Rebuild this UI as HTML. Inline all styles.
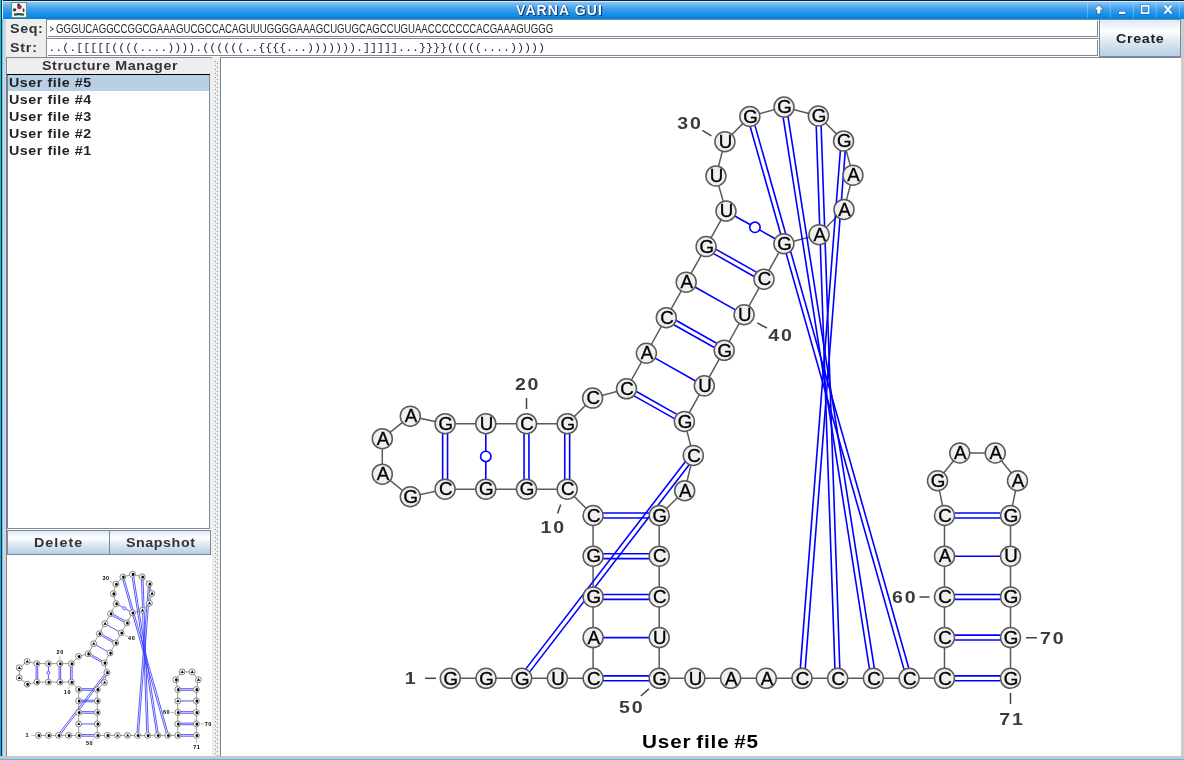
<!DOCTYPE html>
<html><head><meta charset="utf-8"><style>
*{margin:0;padding:0;box-sizing:border-box}
html,body{width:1184px;height:760px;overflow:hidden;background:#eeeeee;font-family:"Liberation Sans",sans-serif;position:relative;-webkit-font-smoothing:antialiased}
body{will-change:transform}
.a{position:absolute}
.ui{font-family:"Liberation Sans",sans-serif;font-weight:bold;font-size:13px;color:#333;letter-spacing:1.05px;white-space:nowrap}
.btn{background:linear-gradient(#dde8f3 0%,#ffffff 30%,#dde8f3 60%,#b8cfe5 100%);border:1px solid #7a8a99}
</style></head><body>
<!-- window frame left -->
<div class="a" style="left:0;top:0;width:1px;height:760px;background:linear-gradient(#00d4c8,#00b4c8)"></div>
<div class="a" style="left:1px;top:0;width:1px;height:760px;background:#0b2a50"></div>
<div class="a" style="left:2px;top:19px;width:1px;height:741px;background:#72c0ff"></div>
<div class="a" style="left:3px;top:19px;width:3px;height:737px;background:#d4d4d4"></div>
<!-- title bar -->
<div class="a" style="left:3px;top:0;width:1181px;height:19px;background:linear-gradient(#0b2440 0px,#0b2440 1px,#d0ecff 1px,#d0ecff 2px,#8ec6f6 2px,#48a4ee 8px,#1890ea 14px,#008ee8 17px,#0880d8 18px,#0880d8 19px)"></div>
<svg class="a" style="left:11px;top:2px" width="16" height="16" viewBox="0 0 16 16">
<rect x="0.6" y="0.6" width="15" height="15" fill="#f6f4f6" stroke="#4f8a78" stroke-width="0.9"/>
<circle cx="7.6" cy="3" r="1.4" fill="#1a3a2c"/>
<circle cx="8.4" cy="5" r="2.3" fill="#b0203e"/>
<ellipse cx="3.6" cy="7.8" rx="1.8" ry="1.6" fill="#1e4a3a"/>
<ellipse cx="12.6" cy="8.2" rx="0.9" ry="1.9" fill="#1e4a3a"/>
<path d="M3 12.6 Q8 11.5 13 12.8" fill="none" stroke="#24503f" stroke-width="2.2"/>
</svg>
<div class="a" style="left:0;top:1px;width:1184px;height:18px;text-align:center;">
<span class="a" style="left:516px;top:1px;font-weight:bold;font-size:14px;letter-spacing:1.1px;color:#fff;text-shadow:0 0 1px #04306a,1px 1px 1px #04306a">VARNA GUI</span>
</div>
<svg class="a" style="left:1084px;top:0" width="100" height="19" viewBox="0 0 100 19">
<g stroke="#cfe6fb" stroke-width="0.6" opacity="0.6"><line x1="3.5" y1="2" x2="3.5" y2="18"/><line x1="26.2" y1="2" x2="26.2" y2="18"/><line x1="49.4" y1="2" x2="49.4" y2="18"/><line x1="72.2" y1="2" x2="72.2" y2="18"/><line x1="95.4" y1="2" x2="95.4" y2="18"/></g>
<g stroke="#1a4a86" stroke-opacity="0.75" stroke-width="1.3" stroke-linejoin="round" paint-order="stroke" fill="#fff">
<path d="M14.8 5.2 L19 9.6 L16.4 9.6 L16.4 13.6 L13.2 13.6 L13.2 9.6 L10.6 9.6 Z"/>
<rect x="34.8" y="11.6" width="6.6" height="2.4"/>
</g>
<rect x="57.6" y="5.8" width="7" height="7.3" fill="none" stroke="#1a4a86" stroke-opacity="0.5" stroke-width="3"/>
<rect x="57.6" y="5.8" width="7" height="7.3" fill="none" stroke="#fff" stroke-width="1.6"/>
<path d="M80.5 5.5 L87.5 13.5 M87.5 5.5 L80.5 13.5" stroke="#1a4a86" stroke-opacity="0.5" stroke-width="3.2"/>
<path d="M80.5 5.5 L87.5 13.5 M87.5 5.5 L80.5 13.5" stroke="#fff" stroke-width="1.9"/>
</svg>
<!-- seq / str labels -->
<div class="a ui" style="left:9.7px;top:21px;font-size:13px;letter-spacing:0.57px;transform:scaleX(1.1);transform-origin:0 0">Seq:</div>
<div class="a ui" style="left:9.7px;top:40px;font-size:13px;letter-spacing:0.71px;transform:scaleX(1.1);transform-origin:0 0">Str:</div>
<!-- fields -->
<div class="a" style="left:46px;top:19px;width:1053px;height:19px;background:#fff;border-left:1px solid #7a8a99;border-top:1px solid #7a8a99"></div>
<div class="a" style="left:48px;top:21px;width:1050px;height:16px;border-right:1px solid #7a8a99;border-bottom:1px solid #7a8a99"></div>
<div class="a" style="left:46px;top:38px;width:1053px;height:19px;background:#fff;border-left:1px solid #7a8a99;border-top:1px solid #7a8a99"></div>
<div class="a" style="left:48px;top:40px;width:1050px;height:16px;border-right:1px solid #7a8a99;border-bottom:1px solid #7a8a99"></div>
<svg class="a" style="left:49px;top:26px" width="6" height="7"><path d="M1 0.8 L4.3 3 L1 5.2" fill="none" stroke="#333" stroke-width="1"/></svg>
<div class="a" style="left:55.5px;top:21.5px;font-size:12px;color:#2a2a2a;white-space:nowrap;transform:scaleX(0.8);transform-origin:0 0">GGGUCAGGCCGGCGAAAGUCGCCACAGUUUGGGGAAAGCUGUGCAGCCUGUAACCCCCCCACGAAAGUGGG</div>
<div class="a" style="left:48.3px;top:40.6px;font-family:'Liberation Mono',monospace;font-size:11.67px;color:#2a2a2a;white-space:nowrap">..(.[[[[[((((....)))).((((((..{{{{...))))))).]]]]]...}}}}(((((....)))))</div>
<!-- create button -->
<div class="a btn" style="left:1099px;top:19px;width:82px;height:38px"></div>
<div class="a ui" style="left:1116px;top:31px;color:#222;letter-spacing:0.6px;transform:scaleX(1.1);transform-origin:0 0">Create</div>
<!-- right strip -->
<div class="a" style="left:1181px;top:19px;width:3px;height:741px;background:#cccccc"></div>
<!-- bottom strip -->
<div class="a" style="left:0;top:756px;width:1184px;height:3px;background:#c8c8c8"></div>
<div class="a" style="left:0;top:759px;width:1184px;height:1px;background:#50b4ff"></div>
<!-- top border of panels -->
<div class="a" style="left:6px;top:57px;width:206px;height:1px;background:#7a8a99"></div>
<!-- left panel: table -->
<div class="a" style="left:6px;top:57px;width:1px;height:699px;background:#7a8a99"></div>
<div class="a" style="left:7px;top:58px;width:204px;height:16px;background:#eeeeee"></div>
<div class="a ui" style="left:41.5px;top:58px;color:#333;letter-spacing:0.52px;transform:scaleX(1.1);transform-origin:0 0">Structure Manager</div>
<div class="a" style="left:7px;top:74px;width:203px;height:1px;background:#000"></div>
<div class="a" style="left:7px;top:75px;width:203px;height:453px;background:#fff"></div>
<div class="a" style="left:6px;top:75px;width:2px;height:454px;background:#6f8398"></div>
<div class="a" style="left:7px;top:58px;width:1px;height:16px;background:#f6f6f6"></div>
<div class="a" style="left:209px;top:75px;width:1px;height:454px;background:#7a8a99"></div>
<div class="a" style="left:8px;top:75px;width:201px;height:16px;background:#b8cfe5"></div>
<div class="a ui" style="left:9px;top:75px;color:#222;letter-spacing:0.49px;transform:scaleX(1.1);transform-origin:0 0">User file #5</div>
<div class="a ui" style="left:9px;top:92px;color:#222;letter-spacing:0.49px;transform:scaleX(1.1);transform-origin:0 0">User file #4</div>
<div class="a ui" style="left:9px;top:109px;color:#222;letter-spacing:0.49px;transform:scaleX(1.1);transform-origin:0 0">User file #3</div>
<div class="a ui" style="left:9px;top:126px;color:#222;letter-spacing:0.49px;transform:scaleX(1.1);transform-origin:0 0">User file #2</div>
<div class="a ui" style="left:9px;top:143px;color:#222;letter-spacing:0.49px;transform:scaleX(1.1);transform-origin:0 0">User file #1</div>
<div class="a" style="left:7px;top:528px;width:203px;height:1px;background:#7a8a99"></div>
<div class="a" style="left:7px;top:529px;width:204px;height:1px;background:#fff"></div>
<!-- buttons -->
<div class="a btn" style="left:7px;top:530px;width:103px;height:25px"></div>
<div class="a btn" style="left:109px;top:530px;width:102px;height:25px"></div>
<div class="a ui" style="left:34.2px;top:535px;letter-spacing:0.95px;transform:scaleX(1.1);transform-origin:0 0">Delete</div>
<div class="a ui" style="left:125.5px;top:535px;letter-spacing:0.49px;transform:scaleX(1.1);transform-origin:0 0">Snapshot</div>
<!-- thumbnail -->
<div class="a" style="left:7px;top:555px;width:205px;height:201px;background:#fff"></div>
<svg class="a" style="left:0;top:0" width="1184" height="760" viewBox="0 0 1184 760">
<g transform="translate(-88.585 544.119) scale(0.2820)"><path d="M450.3 678.3 L486 678.3 L521.7 678.3 L557.4 678.3 L593.1 678.3 L593.1 637.6 L593.1 596.9 L593.1 556.2 L593.1 515.5 L567.2 489.2 L526.5 489.2 L485.8 489.2 L445.1 489.2 L410.3 496.75 L382.3 474.2 L382.3 438.7 L410.3 416.15 L445.1 423.7 L485.8 423.7 L526.5 423.7 L567.2 423.7 L592.6 398.1 L626.5 388.8 L646.4 353.25 L666.3 317.7 L686.2 282.15 L706.1 246.6 L726 211.05 L715.96 175.95 L724.93 141.65 L749.85 116.43 L784.04 107.05 L818.34 116.02 L843.56 140.94 L852.94 175.13 L843.97 209.43 L819.05 234.65 L783.9 243.65 L764 279.2 L744.1 314.75 L724.2 350.3 L704.3 385.85 L684.4 421.4 L693.3 455.4 L684.7 490.7 L659.2 515.5 L659.2 556.2 L659.2 596.9 L659.2 637.6 L659.2 678.3 L694.9 678.3 L730.6 678.3 L766.3 678.3 L802 678.3 L837.7 678.3 L873.4 678.3 L909.1 678.3 L944.5 678.3 L944.5 637.6 L944.5 596.9 L944.5 556.2 L944.5 515.5 L937.5 480.75 L959.75 453 L995.25 453 L1017.5 480.75 L1010.5 515.5 L1010.5 556.2 L1010.5 596.9 L1010.5 637.6 L1010.5 678.3" fill="none" stroke="#777" stroke-width="2.6"/><g stroke="#3a3aff" stroke-width="3" fill="none"><line x1="525.89" y1="668.27" x2="684.68" y2="462.01"/><line x1="530.32" y1="671.69" x2="689.11" y2="465.43"/><line x1="603.6" y1="675.5" x2="648.7" y2="675.5"/><line x1="603.6" y1="681.1" x2="648.7" y2="681.1"/><line x1="603.6" y1="637.6" x2="648.7" y2="637.6"/><line x1="603.6" y1="594.1" x2="648.7" y2="594.1"/><line x1="603.6" y1="599.7" x2="648.7" y2="599.7"/><line x1="603.6" y1="553.4" x2="648.7" y2="553.4"/><line x1="603.6" y1="559" x2="648.7" y2="559"/><line x1="603.6" y1="512.7" x2="648.7" y2="512.7"/><line x1="603.6" y1="518.3" x2="648.7" y2="518.3"/><line x1="564.4" y1="478.7" x2="564.4" y2="434.2"/><line x1="570" y1="478.7" x2="570" y2="434.2"/><line x1="523.7" y1="478.7" x2="523.7" y2="434.2"/><line x1="529.3" y1="478.7" x2="529.3" y2="434.2"/><line x1="485.8" y1="478.7" x2="485.8" y2="461.65"/><line x1="485.8" y1="451.25" x2="485.8" y2="434.2"/><circle cx="485.8" cy="456.45" r="5.2" fill="#fff"/><line x1="442.3" y1="478.7" x2="442.3" y2="434.2"/><line x1="447.9" y1="478.7" x2="447.9" y2="434.2"/><line x1="637.02" y1="391.51" x2="676.62" y2="413.81"/><line x1="634.28" y1="396.39" x2="673.88" y2="418.69"/><line x1="655.55" y1="358.4" x2="695.15" y2="380.7"/><line x1="676.82" y1="320.41" x2="716.42" y2="342.71"/><line x1="674.08" y1="325.29" x2="713.68" y2="347.59"/><line x1="695.35" y1="287.3" x2="734.95" y2="309.6"/><line x1="716.62" y1="249.31" x2="756.22" y2="271.61"/><line x1="713.88" y1="254.19" x2="753.48" y2="276.49"/><line x1="735.15" y1="216.2" x2="750.42" y2="224.8"/><line x1="759.48" y1="229.9" x2="774.75" y2="238.5"/><circle cx="754.95" cy="227.35" r="5.2" fill="#fff"/><line x1="755.41" y1="125.77" x2="908.93" y2="667.43"/><line x1="750.02" y1="127.3" x2="903.54" y2="668.96"/><line x1="788.43" y1="116.99" x2="874.54" y2="667.49"/><line x1="782.9" y1="117.86" x2="869.01" y2="668.36"/><line x1="821.5" y1="126.42" x2="840.14" y2="667.71"/><line x1="815.91" y1="126.61" x2="834.54" y2="667.9"/><line x1="845.54" y1="151.63" x2="805.6" y2="668.05"/><line x1="839.96" y1="151.2" x2="800.02" y2="667.62"/><line x1="955" y1="675.5" x2="1000" y2="675.5"/><line x1="955" y1="681.1" x2="1000" y2="681.1"/><line x1="955" y1="634.8" x2="1000" y2="634.8"/><line x1="955" y1="640.4" x2="1000" y2="640.4"/><line x1="955" y1="594.1" x2="1000" y2="594.1"/><line x1="955" y1="599.7" x2="1000" y2="599.7"/><line x1="955" y1="556.2" x2="1000" y2="556.2"/><line x1="955" y1="512.7" x2="1000" y2="512.7"/><line x1="955" y1="518.3" x2="1000" y2="518.3"/></g><g stroke="#444" stroke-width="1.5"><line x1="425" y1="678.3" x2="436" y2="678.3"/><line x1="560.7" y1="504.4" x2="557.6" y2="513.5"/><line x1="526.5" y1="398" x2="526.5" y2="409"/><line x1="702.4" y1="130.3" x2="711.4" y2="135.9"/><line x1="757.3" y1="322.9" x2="767" y2="328.2"/><line x1="648.9" y1="688.9" x2="640.8" y2="696"/><line x1="919.5" y1="597" x2="929.5" y2="597"/><line x1="1026" y1="637.75" x2="1037" y2="637.75"/><line x1="1010.5" y1="693" x2="1010.5" y2="704"/></g><g font-family="Liberation Sans" font-weight="bold" font-size="17" fill="#000" text-anchor="middle"><text transform="translate(410.3 684.3) scale(1.15 1)" letter-spacing="0">1</text><text transform="translate(553.2 533.2) scale(1.15 1)" letter-spacing="1.6">10</text><text transform="translate(527.6 389.7) scale(1.15 1)" letter-spacing="1.6">20</text><text transform="translate(690 129) scale(1.15 1)" letter-spacing="1.6">30</text><text transform="translate(781 341.4) scale(1.15 1)" letter-spacing="1.6">40</text><text transform="translate(631.7 712.6) scale(1.15 1)" letter-spacing="1.6">50</text><text transform="translate(904.75 603) scale(1.15 1)" letter-spacing="1.6">60</text><text transform="translate(1052.8 644) scale(1.15 1)" letter-spacing="1.6">70</text><text transform="translate(1012 725) scale(1.15 1)" letter-spacing="1.6">71</text></g><g fill="#ffffff" stroke="#5a5a5a" stroke-width="2.6"><circle cx="450.3" cy="678.3" r="10.5"/><circle cx="486" cy="678.3" r="10.5"/><circle cx="521.7" cy="678.3" r="10.5"/><circle cx="557.4" cy="678.3" r="10.5"/><circle cx="593.1" cy="678.3" r="10.5"/><circle cx="593.1" cy="637.6" r="10.5"/><circle cx="593.1" cy="596.9" r="10.5"/><circle cx="593.1" cy="556.2" r="10.5"/><circle cx="593.1" cy="515.5" r="10.5"/><circle cx="567.2" cy="489.2" r="10.5"/><circle cx="526.5" cy="489.2" r="10.5"/><circle cx="485.8" cy="489.2" r="10.5"/><circle cx="445.1" cy="489.2" r="10.5"/><circle cx="410.3" cy="496.75" r="10.5"/><circle cx="382.3" cy="474.2" r="10.5"/><circle cx="382.3" cy="438.7" r="10.5"/><circle cx="410.3" cy="416.15" r="10.5"/><circle cx="445.1" cy="423.7" r="10.5"/><circle cx="485.8" cy="423.7" r="10.5"/><circle cx="526.5" cy="423.7" r="10.5"/><circle cx="567.2" cy="423.7" r="10.5"/><circle cx="592.6" cy="398.1" r="10.5"/><circle cx="626.5" cy="388.8" r="10.5"/><circle cx="646.4" cy="353.25" r="10.5"/><circle cx="666.3" cy="317.7" r="10.5"/><circle cx="686.2" cy="282.15" r="10.5"/><circle cx="706.1" cy="246.6" r="10.5"/><circle cx="726" cy="211.05" r="10.5"/><circle cx="715.96" cy="175.95" r="10.5"/><circle cx="724.93" cy="141.65" r="10.5"/><circle cx="749.85" cy="116.43" r="10.5"/><circle cx="784.04" cy="107.05" r="10.5"/><circle cx="818.34" cy="116.02" r="10.5"/><circle cx="843.56" cy="140.94" r="10.5"/><circle cx="852.94" cy="175.13" r="10.5"/><circle cx="843.97" cy="209.43" r="10.5"/><circle cx="819.05" cy="234.65" r="10.5"/><circle cx="783.9" cy="243.65" r="10.5"/><circle cx="764" cy="279.2" r="10.5"/><circle cx="744.1" cy="314.75" r="10.5"/><circle cx="724.2" cy="350.3" r="10.5"/><circle cx="704.3" cy="385.85" r="10.5"/><circle cx="684.4" cy="421.4" r="10.5"/><circle cx="693.3" cy="455.4" r="10.5"/><circle cx="684.7" cy="490.7" r="10.5"/><circle cx="659.2" cy="515.5" r="10.5"/><circle cx="659.2" cy="556.2" r="10.5"/><circle cx="659.2" cy="596.9" r="10.5"/><circle cx="659.2" cy="637.6" r="10.5"/><circle cx="659.2" cy="678.3" r="10.5"/><circle cx="694.9" cy="678.3" r="10.5"/><circle cx="730.6" cy="678.3" r="10.5"/><circle cx="766.3" cy="678.3" r="10.5"/><circle cx="802" cy="678.3" r="10.5"/><circle cx="837.7" cy="678.3" r="10.5"/><circle cx="873.4" cy="678.3" r="10.5"/><circle cx="909.1" cy="678.3" r="10.5"/><circle cx="944.5" cy="678.3" r="10.5"/><circle cx="944.5" cy="637.6" r="10.5"/><circle cx="944.5" cy="596.9" r="10.5"/><circle cx="944.5" cy="556.2" r="10.5"/><circle cx="944.5" cy="515.5" r="10.5"/><circle cx="937.5" cy="480.75" r="10.5"/><circle cx="959.75" cy="453" r="10.5"/><circle cx="995.25" cy="453" r="10.5"/><circle cx="1017.5" cy="480.75" r="10.5"/><circle cx="1010.5" cy="515.5" r="10.5"/><circle cx="1010.5" cy="556.2" r="10.5"/><circle cx="1010.5" cy="596.9" r="10.5"/><circle cx="1010.5" cy="637.6" r="10.5"/><circle cx="1010.5" cy="678.3" r="10.5"/></g><g font-family="Liberation Sans" font-weight="bold" font-size="19" fill="#000" stroke="#000" stroke-width="0.3" text-anchor="middle"><ellipse cx="452.1" cy="678.8" rx="4.6" ry="5.6"/><ellipse cx="487.8" cy="678.8" rx="4.6" ry="5.6"/><ellipse cx="523.5" cy="678.8" rx="4.6" ry="5.6"/><ellipse cx="559.2" cy="678.8" rx="4.6" ry="5.6"/><ellipse cx="594.9" cy="678.8" rx="4.6" ry="5.6"/><path d="M593.6 631.6 l-5.5 10 h11z"/><ellipse cx="594.9" cy="597.4" rx="4.6" ry="5.6"/><ellipse cx="594.9" cy="556.7" rx="4.6" ry="5.6"/><ellipse cx="594.9" cy="516" rx="4.6" ry="5.6"/><ellipse cx="569" cy="489.7" rx="4.6" ry="5.6"/><ellipse cx="528.3" cy="489.7" rx="4.6" ry="5.6"/><ellipse cx="487.6" cy="489.7" rx="4.6" ry="5.6"/><ellipse cx="446.9" cy="489.7" rx="4.6" ry="5.6"/><ellipse cx="412.1" cy="497.25" rx="4.6" ry="5.6"/><path d="M382.8 468.2 l-5.5 10 h11z"/><path d="M382.8 432.7 l-5.5 10 h11z"/><path d="M410.8 410.15 l-5.5 10 h11z"/><ellipse cx="446.9" cy="424.2" rx="4.6" ry="5.6"/><ellipse cx="487.6" cy="424.2" rx="4.6" ry="5.6"/><ellipse cx="528.3" cy="424.2" rx="4.6" ry="5.6"/><ellipse cx="569" cy="424.2" rx="4.6" ry="5.6"/><ellipse cx="594.4" cy="398.6" rx="4.6" ry="5.6"/><ellipse cx="628.3" cy="389.3" rx="4.6" ry="5.6"/><path d="M646.9 347.25 l-5.5 10 h11z"/><ellipse cx="668.1" cy="318.2" rx="4.6" ry="5.6"/><path d="M686.7 276.15 l-5.5 10 h11z"/><ellipse cx="707.9" cy="247.1" rx="4.6" ry="5.6"/><ellipse cx="727.8" cy="211.55" rx="4.6" ry="5.6"/><ellipse cx="717.76" cy="176.45" rx="4.6" ry="5.6"/><ellipse cx="726.73" cy="142.15" rx="4.6" ry="5.6"/><ellipse cx="751.65" cy="116.93" rx="4.6" ry="5.6"/><ellipse cx="785.84" cy="107.55" rx="4.6" ry="5.6"/><ellipse cx="820.14" cy="116.52" rx="4.6" ry="5.6"/><ellipse cx="845.36" cy="141.44" rx="4.6" ry="5.6"/><path d="M853.44 169.13 l-5.5 10 h11z"/><path d="M844.47 203.43 l-5.5 10 h11z"/><path d="M819.55 228.65 l-5.5 10 h11z"/><ellipse cx="785.7" cy="244.15" rx="4.6" ry="5.6"/><ellipse cx="765.8" cy="279.7" rx="4.6" ry="5.6"/><ellipse cx="745.9" cy="315.25" rx="4.6" ry="5.6"/><ellipse cx="726" cy="350.8" rx="4.6" ry="5.6"/><ellipse cx="706.1" cy="386.35" rx="4.6" ry="5.6"/><ellipse cx="686.2" cy="421.9" rx="4.6" ry="5.6"/><ellipse cx="695.1" cy="455.9" rx="4.6" ry="5.6"/><path d="M685.2 484.7 l-5.5 10 h11z"/><ellipse cx="661" cy="516" rx="4.6" ry="5.6"/><ellipse cx="661" cy="556.7" rx="4.6" ry="5.6"/><ellipse cx="661" cy="597.4" rx="4.6" ry="5.6"/><ellipse cx="661" cy="638.1" rx="4.6" ry="5.6"/><ellipse cx="661" cy="678.8" rx="4.6" ry="5.6"/><ellipse cx="696.7" cy="678.8" rx="4.6" ry="5.6"/><path d="M731.1 672.3 l-5.5 10 h11z"/><path d="M766.8 672.3 l-5.5 10 h11z"/><ellipse cx="803.8" cy="678.8" rx="4.6" ry="5.6"/><ellipse cx="839.5" cy="678.8" rx="4.6" ry="5.6"/><ellipse cx="875.2" cy="678.8" rx="4.6" ry="5.6"/><ellipse cx="910.9" cy="678.8" rx="4.6" ry="5.6"/><ellipse cx="946.3" cy="678.8" rx="4.6" ry="5.6"/><ellipse cx="946.3" cy="638.1" rx="4.6" ry="5.6"/><ellipse cx="946.3" cy="597.4" rx="4.6" ry="5.6"/><path d="M945 550.2 l-5.5 10 h11z"/><ellipse cx="946.3" cy="516" rx="4.6" ry="5.6"/><ellipse cx="939.3" cy="481.25" rx="4.6" ry="5.6"/><path d="M960.25 447 l-5.5 10 h11z"/><path d="M995.75 447 l-5.5 10 h11z"/><path d="M1018 474.75 l-5.5 10 h11z"/><ellipse cx="1012.3" cy="516" rx="4.6" ry="5.6"/><ellipse cx="1012.3" cy="556.7" rx="4.6" ry="5.6"/><ellipse cx="1012.3" cy="597.4" rx="4.6" ry="5.6"/><ellipse cx="1012.3" cy="638.1" rx="4.6" ry="5.6"/><ellipse cx="1012.3" cy="678.8" rx="4.6" ry="5.6"/></g></g>
</svg>
<!-- divider -->
<div class="a" style="left:212px;top:57px;width:8px;height:699px;background:#eeeeee"></div>
<svg class="a" style="left:212px;top:57px" width="8" height="699"><defs><pattern id="dots" x="0" y="0" width="8" height="4" patternUnits="userSpaceOnUse"><rect x="3" y="0" width="1" height="1" fill="#8a8a8a"/><rect x="5" y="2" width="1" height="1" fill="#8a8a8a"/></pattern></defs><rect x="0" y="4" width="8" height="695" fill="url(#dots)"/></svg>
<!-- right panel -->
<div class="a" style="left:220px;top:57px;width:961px;height:699px;background:#fff;border-left:1px solid #7a8a99;border-top:1px solid #7a8a99"></div>
<svg class="a" style="left:0;top:0" width="1184" height="760" viewBox="0 0 1184 760">
<path d="M450.3 678.3 L486 678.3 L521.7 678.3 L557.4 678.3 L593.1 678.3 L593.1 637.6 L593.1 596.9 L593.1 556.2 L593.1 515.5 L567.2 489.2 L526.5 489.2 L485.8 489.2 L445.1 489.2 L410.3 496.75 L382.3 474.2 L382.3 438.7 L410.3 416.15 L445.1 423.7 L485.8 423.7 L526.5 423.7 L567.2 423.7 L592.6 398.1 L626.5 388.8 L646.4 353.25 L666.3 317.7 L686.2 282.15 L706.1 246.6 L726 211.05 L715.96 175.95 L724.93 141.65 L749.85 116.43 L784.04 107.05 L818.34 116.02 L843.56 140.94 L852.94 175.13 L843.97 209.43 L819.05 234.65 L783.9 243.65 L764 279.2 L744.1 314.75 L724.2 350.3 L704.3 385.85 L684.4 421.4 L693.3 455.4 L684.7 490.7 L659.2 515.5 L659.2 556.2 L659.2 596.9 L659.2 637.6 L659.2 678.3 L694.9 678.3 L730.6 678.3 L766.3 678.3 L802 678.3 L837.7 678.3 L873.4 678.3 L909.1 678.3 L944.5 678.3 L944.5 637.6 L944.5 596.9 L944.5 556.2 L944.5 515.5 L937.5 480.75 L959.75 453 L995.25 453 L1017.5 480.75 L1010.5 515.5 L1010.5 556.2 L1010.5 596.9 L1010.5 637.6 L1010.5 678.3" fill="none" stroke="#5a5a5a" stroke-width="1.5"/><g stroke="#0000ff" stroke-width="1.6" fill="none"><line x1="525.86" y1="668.88" x2="685.26" y2="461.83"/><line x1="529.74" y1="671.87" x2="689.14" y2="464.82"/><line x1="603.1" y1="675.85" x2="649.2" y2="675.85"/><line x1="603.1" y1="680.75" x2="649.2" y2="680.75"/><line x1="603.1" y1="637.6" x2="649.2" y2="637.6"/><line x1="603.1" y1="594.45" x2="649.2" y2="594.45"/><line x1="603.1" y1="599.35" x2="649.2" y2="599.35"/><line x1="603.1" y1="553.75" x2="649.2" y2="553.75"/><line x1="603.1" y1="558.65" x2="649.2" y2="558.65"/><line x1="603.1" y1="513.05" x2="649.2" y2="513.05"/><line x1="603.1" y1="517.95" x2="649.2" y2="517.95"/><line x1="564.75" y1="479.2" x2="564.75" y2="433.7"/><line x1="569.65" y1="479.2" x2="569.65" y2="433.7"/><line x1="524.05" y1="479.2" x2="524.05" y2="433.7"/><line x1="528.95" y1="479.2" x2="528.95" y2="433.7"/><line x1="485.8" y1="479.2" x2="485.8" y2="461.65"/><line x1="485.8" y1="451.25" x2="485.8" y2="433.7"/><circle cx="485.8" cy="456.45" r="5.2" fill="#fff"/><line x1="442.65" y1="479.2" x2="442.65" y2="433.7"/><line x1="447.55" y1="479.2" x2="447.55" y2="433.7"/><line x1="636.42" y1="391.57" x2="676.89" y2="414.36"/><line x1="634.01" y1="395.84" x2="674.48" y2="418.63"/><line x1="655.11" y1="358.16" x2="695.59" y2="380.94"/><line x1="676.22" y1="320.47" x2="716.69" y2="343.26"/><line x1="673.81" y1="324.74" x2="714.28" y2="347.53"/><line x1="694.91" y1="287.06" x2="735.39" y2="309.84"/><line x1="716.02" y1="249.37" x2="756.49" y2="272.16"/><line x1="713.61" y1="253.64" x2="754.08" y2="276.43"/><line x1="734.71" y1="215.96" x2="750.42" y2="224.8"/><line x1="759.48" y1="229.9" x2="775.19" y2="238.74"/><circle cx="754.95" cy="227.35" r="5.2" fill="#fff"/><line x1="754.94" y1="125.38" x2="908.73" y2="668.01"/><line x1="750.22" y1="126.72" x2="904.02" y2="669.35"/><line x1="788.01" y1="116.55" x2="874.28" y2="668.04"/><line x1="783.17" y1="117.31" x2="869.43" y2="668.8"/><line x1="821.14" y1="125.93" x2="839.8" y2="668.22"/><line x1="816.24" y1="126.1" x2="834.91" y2="668.39"/><line x1="845.23" y1="151.1" x2="805.21" y2="668.52"/><line x1="840.35" y1="150.72" x2="800.33" y2="668.14"/><line x1="954.5" y1="675.85" x2="1000.5" y2="675.85"/><line x1="954.5" y1="680.75" x2="1000.5" y2="680.75"/><line x1="954.5" y1="635.15" x2="1000.5" y2="635.15"/><line x1="954.5" y1="640.05" x2="1000.5" y2="640.05"/><line x1="954.5" y1="594.45" x2="1000.5" y2="594.45"/><line x1="954.5" y1="599.35" x2="1000.5" y2="599.35"/><line x1="954.5" y1="556.2" x2="1000.5" y2="556.2"/><line x1="954.5" y1="513.05" x2="1000.5" y2="513.05"/><line x1="954.5" y1="517.95" x2="1000.5" y2="517.95"/></g><g stroke="#444" stroke-width="1.5"><line x1="425" y1="678.3" x2="436" y2="678.3"/><line x1="560.7" y1="504.4" x2="557.6" y2="513.5"/><line x1="526.5" y1="398" x2="526.5" y2="409"/><line x1="702.4" y1="130.3" x2="711.4" y2="135.9"/><line x1="757.3" y1="322.9" x2="767" y2="328.2"/><line x1="648.9" y1="688.9" x2="640.8" y2="696"/><line x1="919.5" y1="597" x2="929.5" y2="597"/><line x1="1026" y1="637.75" x2="1037" y2="637.75"/><line x1="1010.5" y1="693" x2="1010.5" y2="704"/></g><g font-family="Liberation Sans" font-weight="bold" font-size="17" fill="#3c3c3c" text-anchor="middle"><text transform="translate(410.3 684.3) scale(1.15 1)" letter-spacing="0">1</text><text transform="translate(553.2 533.2) scale(1.15 1)" letter-spacing="1.6">10</text><text transform="translate(527.6 389.7) scale(1.15 1)" letter-spacing="1.6">20</text><text transform="translate(690 129) scale(1.15 1)" letter-spacing="1.6">30</text><text transform="translate(781 341.4) scale(1.15 1)" letter-spacing="1.6">40</text><text transform="translate(631.7 712.6) scale(1.15 1)" letter-spacing="1.6">50</text><text transform="translate(904.75 603) scale(1.15 1)" letter-spacing="1.6">60</text><text transform="translate(1052.8 644) scale(1.15 1)" letter-spacing="1.6">70</text><text transform="translate(1012 725) scale(1.15 1)" letter-spacing="1.6">71</text></g><g fill="#f0f0f0" stroke="#595959" stroke-width="1.5"><circle cx="450.3" cy="678.3" r="10"/><circle cx="486" cy="678.3" r="10"/><circle cx="521.7" cy="678.3" r="10"/><circle cx="557.4" cy="678.3" r="10"/><circle cx="593.1" cy="678.3" r="10"/><circle cx="593.1" cy="637.6" r="10"/><circle cx="593.1" cy="596.9" r="10"/><circle cx="593.1" cy="556.2" r="10"/><circle cx="593.1" cy="515.5" r="10"/><circle cx="567.2" cy="489.2" r="10"/><circle cx="526.5" cy="489.2" r="10"/><circle cx="485.8" cy="489.2" r="10"/><circle cx="445.1" cy="489.2" r="10"/><circle cx="410.3" cy="496.75" r="10"/><circle cx="382.3" cy="474.2" r="10"/><circle cx="382.3" cy="438.7" r="10"/><circle cx="410.3" cy="416.15" r="10"/><circle cx="445.1" cy="423.7" r="10"/><circle cx="485.8" cy="423.7" r="10"/><circle cx="526.5" cy="423.7" r="10"/><circle cx="567.2" cy="423.7" r="10"/><circle cx="592.6" cy="398.1" r="10"/><circle cx="626.5" cy="388.8" r="10"/><circle cx="646.4" cy="353.25" r="10"/><circle cx="666.3" cy="317.7" r="10"/><circle cx="686.2" cy="282.15" r="10"/><circle cx="706.1" cy="246.6" r="10"/><circle cx="726" cy="211.05" r="10"/><circle cx="715.96" cy="175.95" r="10"/><circle cx="724.93" cy="141.65" r="10"/><circle cx="749.85" cy="116.43" r="10"/><circle cx="784.04" cy="107.05" r="10"/><circle cx="818.34" cy="116.02" r="10"/><circle cx="843.56" cy="140.94" r="10"/><circle cx="852.94" cy="175.13" r="10"/><circle cx="843.97" cy="209.43" r="10"/><circle cx="819.05" cy="234.65" r="10"/><circle cx="783.9" cy="243.65" r="10"/><circle cx="764" cy="279.2" r="10"/><circle cx="744.1" cy="314.75" r="10"/><circle cx="724.2" cy="350.3" r="10"/><circle cx="704.3" cy="385.85" r="10"/><circle cx="684.4" cy="421.4" r="10"/><circle cx="693.3" cy="455.4" r="10"/><circle cx="684.7" cy="490.7" r="10"/><circle cx="659.2" cy="515.5" r="10"/><circle cx="659.2" cy="556.2" r="10"/><circle cx="659.2" cy="596.9" r="10"/><circle cx="659.2" cy="637.6" r="10"/><circle cx="659.2" cy="678.3" r="10"/><circle cx="694.9" cy="678.3" r="10"/><circle cx="730.6" cy="678.3" r="10"/><circle cx="766.3" cy="678.3" r="10"/><circle cx="802" cy="678.3" r="10"/><circle cx="837.7" cy="678.3" r="10"/><circle cx="873.4" cy="678.3" r="10"/><circle cx="909.1" cy="678.3" r="10"/><circle cx="944.5" cy="678.3" r="10"/><circle cx="944.5" cy="637.6" r="10"/><circle cx="944.5" cy="596.9" r="10"/><circle cx="944.5" cy="556.2" r="10"/><circle cx="944.5" cy="515.5" r="10"/><circle cx="937.5" cy="480.75" r="10"/><circle cx="959.75" cy="453" r="10"/><circle cx="995.25" cy="453" r="10"/><circle cx="1017.5" cy="480.75" r="10"/><circle cx="1010.5" cy="515.5" r="10"/><circle cx="1010.5" cy="556.2" r="10"/><circle cx="1010.5" cy="596.9" r="10"/><circle cx="1010.5" cy="637.6" r="10"/><circle cx="1010.5" cy="678.3" r="10"/></g><g font-family="Liberation Sans" font-weight="normal" font-size="17.5" fill="#000" stroke="#000" stroke-width="0.3" text-anchor="middle"><text transform="translate(450.9 684.5) scale(1.07 1)">G</text><text transform="translate(486.6 684.5) scale(1.07 1)">G</text><text transform="translate(522.3 684.5) scale(1.07 1)">G</text><text transform="translate(558 684.5) scale(1.07 1)">U</text><text transform="translate(593.7 684.5) scale(1.07 1)">C</text><text transform="translate(593.7 643.8) scale(1.07 1)">A</text><text transform="translate(593.7 603.1) scale(1.07 1)">G</text><text transform="translate(593.7 562.4) scale(1.07 1)">G</text><text transform="translate(593.7 521.7) scale(1.07 1)">C</text><text transform="translate(567.8 495.4) scale(1.07 1)">C</text><text transform="translate(527.1 495.4) scale(1.07 1)">G</text><text transform="translate(486.4 495.4) scale(1.07 1)">G</text><text transform="translate(445.7 495.4) scale(1.07 1)">C</text><text transform="translate(410.9 502.95) scale(1.07 1)">G</text><text transform="translate(382.9 480.4) scale(1.07 1)">A</text><text transform="translate(382.9 444.9) scale(1.07 1)">A</text><text transform="translate(410.9 422.35) scale(1.07 1)">A</text><text transform="translate(445.7 429.9) scale(1.07 1)">G</text><text transform="translate(486.4 429.9) scale(1.07 1)">U</text><text transform="translate(527.1 429.9) scale(1.07 1)">C</text><text transform="translate(567.8 429.9) scale(1.07 1)">G</text><text transform="translate(593.2 404.3) scale(1.07 1)">C</text><text transform="translate(627.1 395) scale(1.07 1)">C</text><text transform="translate(647 359.45) scale(1.07 1)">A</text><text transform="translate(666.9 323.9) scale(1.07 1)">C</text><text transform="translate(686.8 288.35) scale(1.07 1)">A</text><text transform="translate(706.7 252.8) scale(1.07 1)">G</text><text transform="translate(726.6 217.25) scale(1.07 1)">U</text><text transform="translate(716.56 182.15) scale(1.07 1)">U</text><text transform="translate(725.53 147.85) scale(1.07 1)">U</text><text transform="translate(750.45 122.63) scale(1.07 1)">G</text><text transform="translate(784.64 113.25) scale(1.07 1)">G</text><text transform="translate(818.94 122.22) scale(1.07 1)">G</text><text transform="translate(844.16 147.14) scale(1.07 1)">G</text><text transform="translate(853.54 181.33) scale(1.07 1)">A</text><text transform="translate(844.57 215.63) scale(1.07 1)">A</text><text transform="translate(819.65 240.85) scale(1.07 1)">A</text><text transform="translate(784.5 249.85) scale(1.07 1)">G</text><text transform="translate(764.6 285.4) scale(1.07 1)">C</text><text transform="translate(744.7 320.95) scale(1.07 1)">U</text><text transform="translate(724.8 356.5) scale(1.07 1)">G</text><text transform="translate(704.9 392.05) scale(1.07 1)">U</text><text transform="translate(685 427.6) scale(1.07 1)">G</text><text transform="translate(693.9 461.6) scale(1.07 1)">C</text><text transform="translate(685.3 496.9) scale(1.07 1)">A</text><text transform="translate(659.8 521.7) scale(1.07 1)">G</text><text transform="translate(659.8 562.4) scale(1.07 1)">C</text><text transform="translate(659.8 603.1) scale(1.07 1)">C</text><text transform="translate(659.8 643.8) scale(1.07 1)">U</text><text transform="translate(659.8 684.5) scale(1.07 1)">G</text><text transform="translate(695.5 684.5) scale(1.07 1)">U</text><text transform="translate(731.2 684.5) scale(1.07 1)">A</text><text transform="translate(766.9 684.5) scale(1.07 1)">A</text><text transform="translate(802.6 684.5) scale(1.07 1)">C</text><text transform="translate(838.3 684.5) scale(1.07 1)">C</text><text transform="translate(874 684.5) scale(1.07 1)">C</text><text transform="translate(909.7 684.5) scale(1.07 1)">C</text><text transform="translate(945.1 684.5) scale(1.07 1)">C</text><text transform="translate(945.1 643.8) scale(1.07 1)">C</text><text transform="translate(945.1 603.1) scale(1.07 1)">C</text><text transform="translate(945.1 562.4) scale(1.07 1)">A</text><text transform="translate(945.1 521.7) scale(1.07 1)">C</text><text transform="translate(938.1 486.95) scale(1.07 1)">G</text><text transform="translate(960.35 459.2) scale(1.07 1)">A</text><text transform="translate(995.85 459.2) scale(1.07 1)">A</text><text transform="translate(1018.1 486.95) scale(1.07 1)">A</text><text transform="translate(1011.1 521.7) scale(1.07 1)">G</text><text transform="translate(1011.1 562.4) scale(1.07 1)">U</text><text transform="translate(1011.1 603.1) scale(1.07 1)">G</text><text transform="translate(1011.1 643.8) scale(1.07 1)">G</text><text transform="translate(1011.1 684.5) scale(1.07 1)">G</text></g>
<text transform="translate(700.5 748) scale(1.09 1)" font-family="Liberation Sans" font-weight="bold" font-size="19" fill="#000" text-anchor="middle" letter-spacing="0.8" word-spacing="-1.8">User file #5</text>
</svg>
</body></html>
